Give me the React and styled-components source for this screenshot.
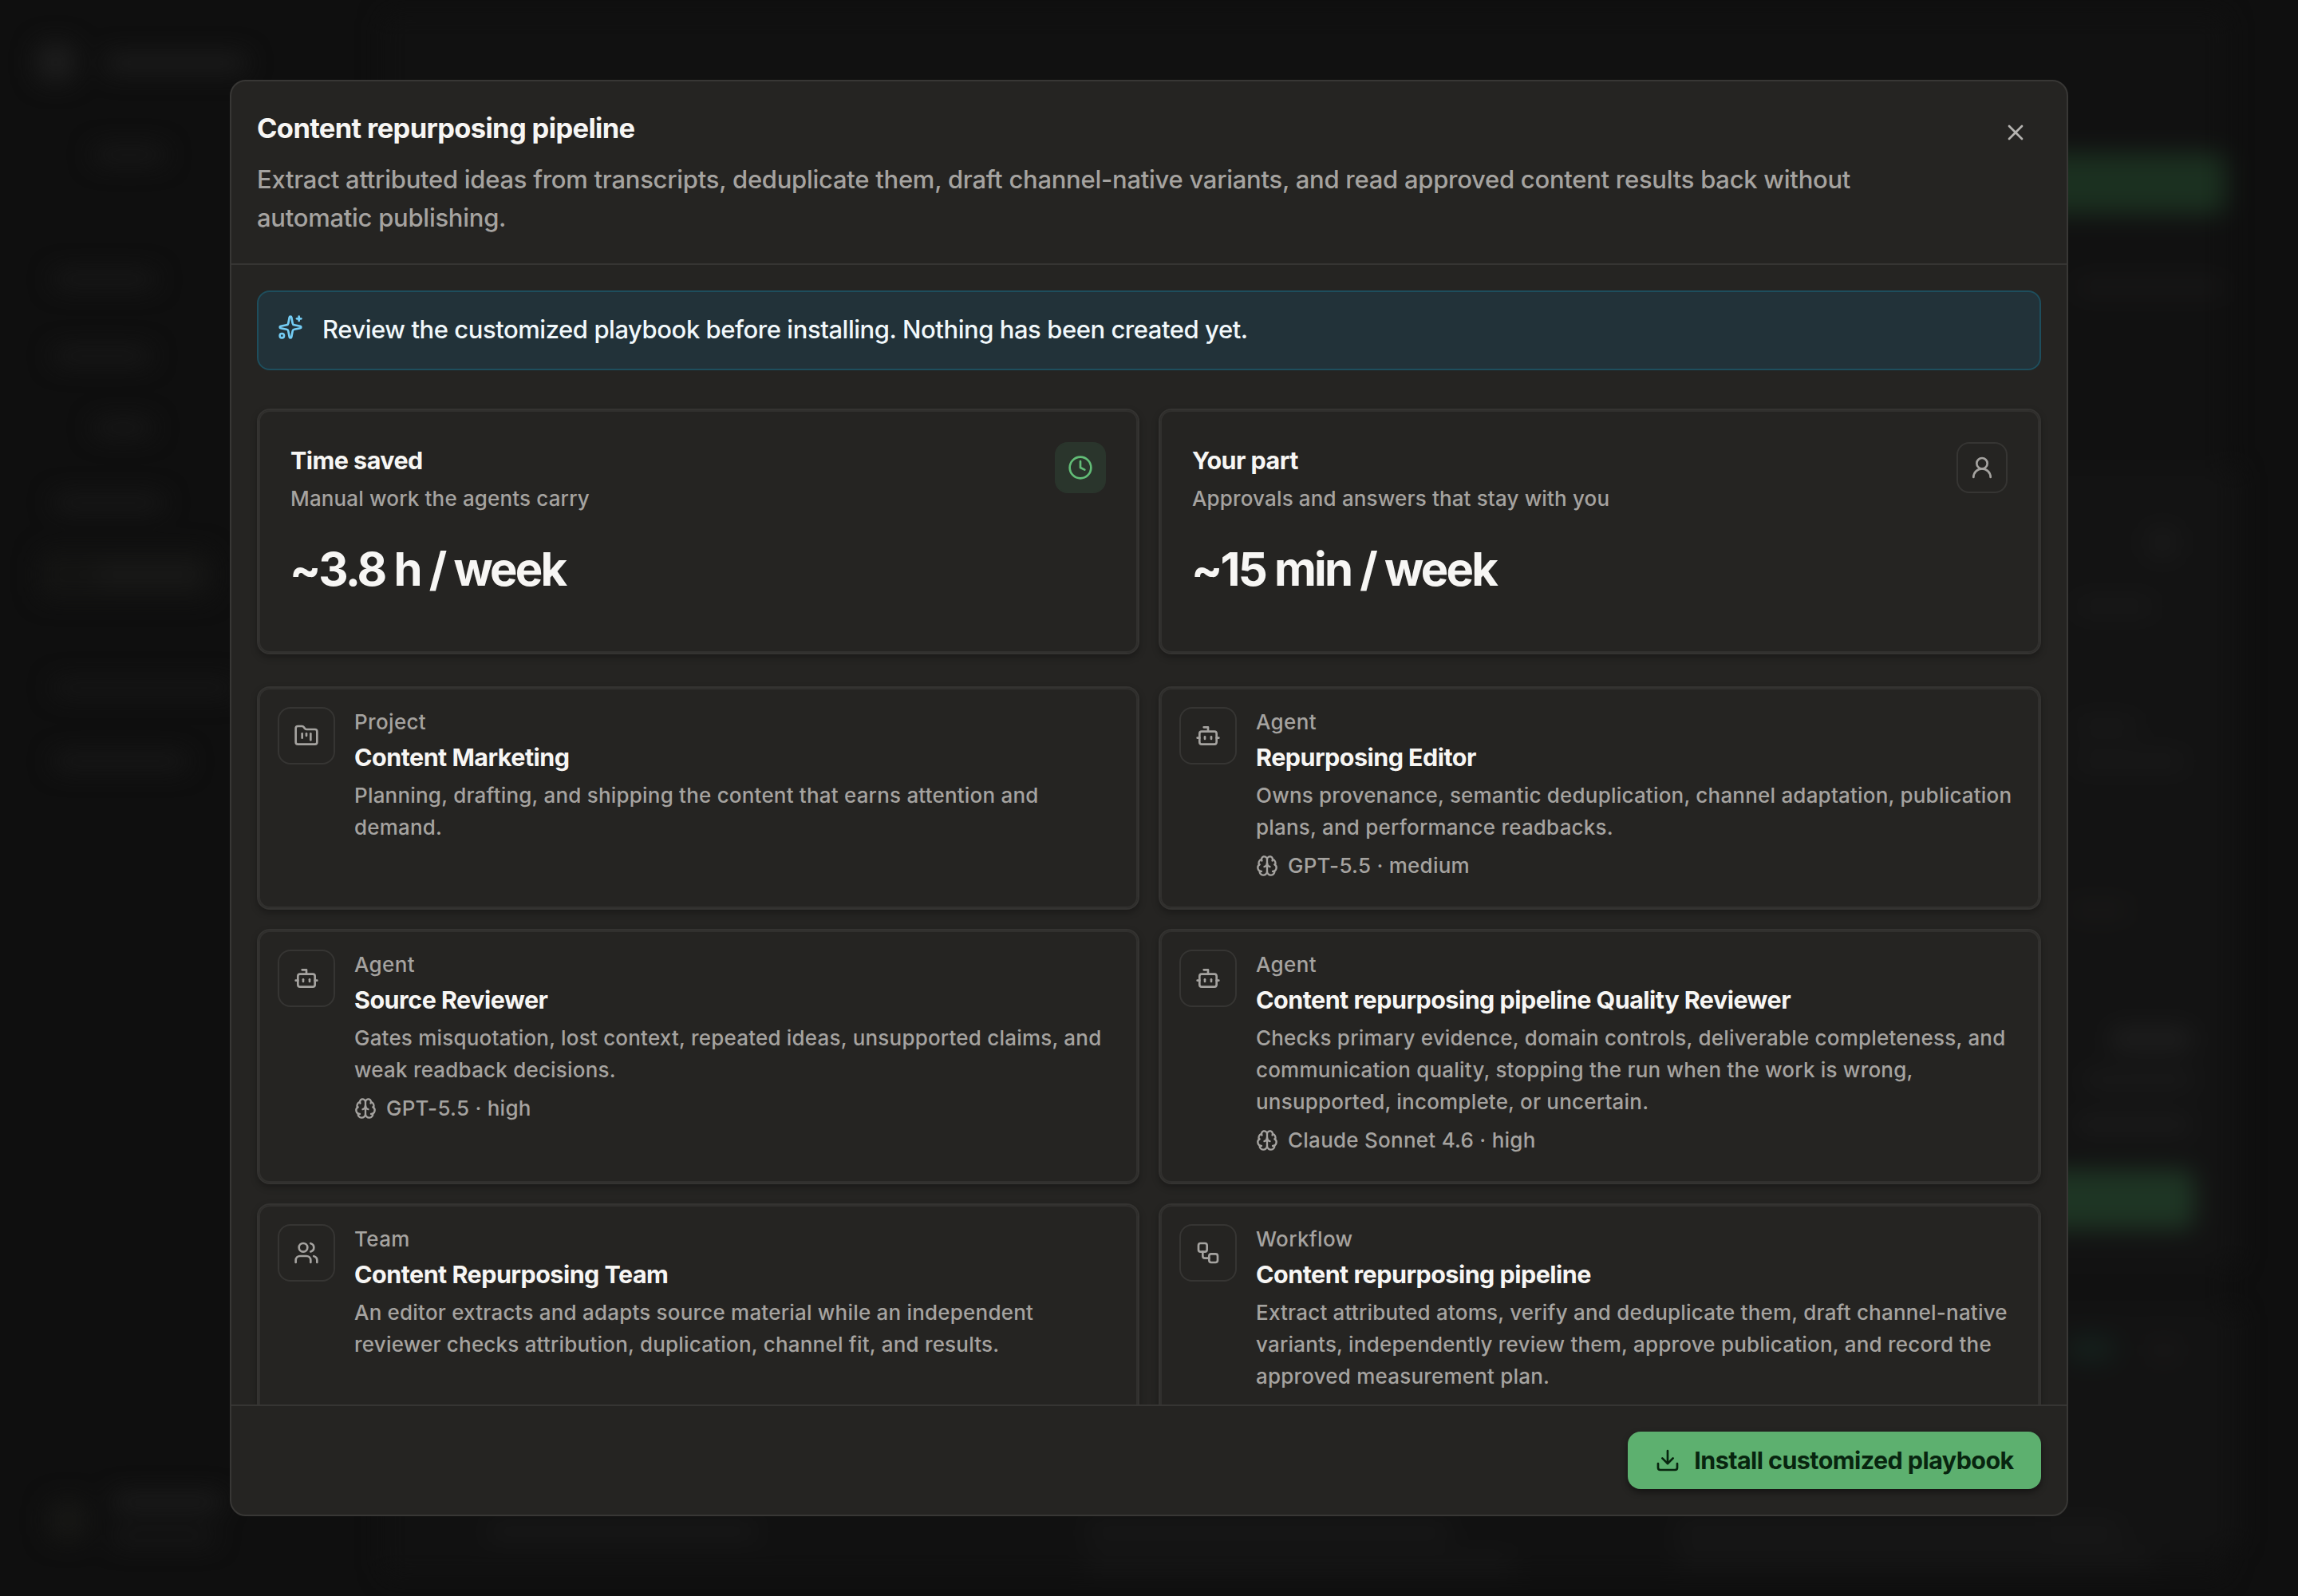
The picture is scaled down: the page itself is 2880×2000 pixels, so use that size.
import React from 'react'
import styled, { createGlobalStyle } from 'styled-components'
import {
  Bot,
  Brain,
  Clock,
  Download,
  FolderKanban,
  Sparkles,
  UserRound,
  Users,
  Workflow,
  X,
} from 'lucide-react'

const GlobalStyle = createGlobalStyle`
  * {
    box-sizing: border-box;
  }
  body {
    margin: 0;
    background: #0f0f0f;
    color: #f7f6f4;
    font-family: Inter, 'Liberation Sans', sans-serif;
    font-weight: 450;
    -webkit-font-smoothing: antialiased;
  }
  h2, h3, p {
    margin: 0;
  }
`

const Screen = styled.div`
  position: relative;
  display: flex;
  justify-content: center;
  align-items: center;
  width: 2880px;
  height: 2000px;
  overflow: hidden;
  background: #0f0f0f;
`

// Dimmed page behind the dialog
const Backdrop = styled.div`
  position: absolute;
  inset: 0;
  filter: blur(15px);
`

const Blob = styled.div`
  position: absolute;
  left: ${(props) => props.$x}px;
  top: ${(props) => props.$y}px;
  width: ${(props) => props.$w}px;
  height: ${(props) => props.$h}px;
  border-radius: 14px;
  background: ${(props) => props.$color || '#191919'};
`

const Dialog = styled.section`
  position: relative;
  display: flex;
  flex-direction: column;
  width: 2304px;
  height: 1800px;
  border: 2px solid #383735;
  border-radius: 20px;
  background: #252422;
  overflow: hidden;
`

const Header = styled.header`
  display: flex;
  justify-content: space-between;
  align-items: flex-start;
  padding: 32px;
  border-bottom: 2px solid #363533;
`

const HeaderText = styled.div`
  width: 2060px;
  margin: -1px 0 1px;
`

const Title = styled.h2`
  font-size: 34.5px;
  line-height: 56px;
  font-weight: 650;
  letter-spacing: -0.65px;
`

const Subtitle = styled.p`
  margin-top: 12px;
  color: #a5a3a0;
  font-size: 31px;
  line-height: 48px;
  letter-spacing: -0.27px;
`

const CloseButton = styled.button`
  display: flex;
  justify-content: center;
  align-items: center;
  width: 64px;
  height: 64px;
  padding: 0;
  border: none;
  background: none;
  color: #b5b3b0;
`

const Body = styled.div`
  flex: 1;
  min-height: 0;
  padding: 32px;
  overflow: hidden;
`

const Banner = styled.div`
  display: flex;
  align-items: flex-start;
  gap: 24px;
  height: 100px;
  padding: 24px;
  border: 2px solid #1e4e5d;
  border-radius: 16px;
  background: #223239;
  color: #f1f8fb;
  font-size: 31px;
  line-height: 48px;
  letter-spacing: -0.45px;

  svg {
    margin-top: 4px;
    color: #74cdf5;
  }

  span {
    margin-top: -1px;
  }
`

const Grid = styled.div`
  display: grid;
  grid-template-columns: 1fr 1fr;
  gap: 24px;
  margin-top: ${(props) => props.$top}px;
`

const Card = styled.article`
  display: flex;
  border: 2px solid #343331;
  border-radius: 16px;
  background: #252422;
  box-shadow: inset 0 0 0 2px #31302e, 0 4px 8px rgba(0, 0, 0, 0.28);
`

const StatCard = styled(Card)`
  justify-content: space-between;
  height: 308px;
  padding: 40px;
`

const StatText = styled.div`
  margin-top: -1px;
`

const StatTitle = styled.h3`
  font-size: 30.5px;
  line-height: 48px;
  font-weight: 650;
  letter-spacing: -0.55px;
`

const StatHint = styled.p`
  margin-top: 2px;
  color: #a5a3a0;
  font-size: 26px;
  line-height: 44px;
  letter-spacing: 0.15px;
`

const StatValue = styled.p`
  margin: 30px 0 0 -1px;
  font-size: 58px;
  line-height: 72px;
  font-weight: 650;
  letter-spacing: -2.8px;
`

const IconBox = styled.div`
  display: flex;
  flex: none;
  justify-content: center;
  align-items: center;
  width: ${(props) => props.$size}px;
  height: ${(props) => props.$size}px;
  border: 2px solid ${(props) => (props.$green ? '#2a352c' : '#363533')};
  border-radius: 16px;
  background: ${(props) => (props.$green ? '#2a352c' : 'transparent')};
  color: ${(props) => (props.$green ? '#62bd77' : '#a5a3a0')};
`

const ItemCard = styled(Card)`
  gap: 24px;
  padding: 24px 20px 32px 24px;
`

const ItemText = styled.div`
  flex: 1;
  min-width: 0;
  margin: -1px 0 1px;
`

const Kind = styled.p`
  color: #a5a3a0;
  font-size: 26px;
  line-height: 40px;
  font-weight: 500;
  letter-spacing: 0.35px;
`

const ItemTitle = styled.h3`
  font-size: 30.5px;
  line-height: 48px;
  font-weight: 650;
  letter-spacing: -0.53px;
`

const Description = styled.p`
  margin-top: 4px;
  color: #a5a3a0;
  font-size: 26px;
  line-height: 40px;
  letter-spacing: 0.2px;
  white-space: pre-line;
`

const Model = styled.p`
  display: flex;
  align-items: center;
  gap: 12px;
  margin-top: 8px;
  color: #a5a3a0;
  font-size: 26px;
  line-height: 40px;
  font-weight: 500;
  letter-spacing: 0.25px;
`

const Footer = styled.footer`
  display: flex;
  justify-content: flex-end;
  padding: 32px;
  border-top: 2px solid #363533;
`

const InstallButton = styled.button`
  display: flex;
  justify-content: center;
  align-items: center;
  gap: 17px;
  width: 518px;
  height: 72px;
  padding: 0;
  border: none;
  border-radius: 16px;
  background: #5db06f;
  box-shadow: 0 4px 8px rgba(0, 0, 0, 0.45);
  color: #08250f;
  font-family: inherit;
  font-size: 30.5px;
  font-weight: 650;
  letter-spacing: -0.58px;

  span {
    padding-bottom: 2px;
  }
`

const blobs = [
  { x: 46, y: 54, w: 48, h: 48, color: '#1d1d1d' },
  { x: 130, y: 68, w: 180, h: 22, color: '#1d1d1d' },
  { x: 116, y: 184, w: 92, h: 20 },
  { x: 66, y: 340, w: 130, h: 20 },
  { x: 66, y: 436, w: 124, h: 20 },
  { x: 116, y: 526, w: 76, h: 20 },
  { x: 66, y: 620, w: 140, h: 20 },
  { x: 48, y: 690, w: 220, h: 60, color: '#141413' },
  { x: 120, y: 710, w: 130, h: 20, color: '#1b1b1a' },
  { x: 66, y: 852, w: 230, h: 20, color: '#171717' },
  { x: 66, y: 944, w: 170, h: 20 },
  { x: 60, y: 1880, w: 50, h: 50, color: '#171715' },
  { x: 140, y: 1872, w: 140, h: 20, color: '#1e1e1e' },
  { x: 140, y: 1918, w: 130, h: 16 },
  { x: 480, y: 16, w: 2310, h: 1960, color: '#111111' },
  { x: 2560, y: 586, w: 246, h: 1000, color: '#131313' },
  { x: 2560, y: 1640, w: 246, h: 300, color: '#131313' },
  { x: 2500, y: 192, w: 290, h: 76, color: '#1b3020' },
  { x: 2600, y: 350, w: 190, h: 20, color: '#181717' },
  { x: 2690, y: 660, w: 40, h: 40, color: '#191919' },
  { x: 2600, y: 750, w: 100, h: 20, color: '#191919' },
  { x: 2600, y: 900, w: 80, h: 20, color: '#191919' },
  { x: 2600, y: 944, w: 140, h: 20, color: '#191919' },
  { x: 2590, y: 1130, w: 80, h: 20, color: '#191817' },
  { x: 2644, y: 1288, w: 104, h: 28, color: '#1e1e1e' },
  { x: 2610, y: 1344, w: 140, h: 18, color: '#1b1b1b' },
  { x: 2600, y: 1400, w: 146, h: 18, color: '#1c1c1c' },
  { x: 2500, y: 1466, w: 250, h: 74, color: '#1e3524' },
  { x: 2590, y: 1674, w: 60, h: 32, color: '#14201c' },
  { x: 2692, y: 1680, w: 40, h: 24, color: '#191717' },
  { x: 610, y: 1908, w: 340, h: 22, color: '#181818' },
  { x: 1360, y: 1908, w: 460, h: 22, color: '#181818' },
  { x: 1360, y: 1950, w: 540, h: 20, color: '#171717' },
  { x: 2100, y: 1908, w: 560, h: 22, color: '#181818' },
  { x: 2100, y: 1944, w: 600, h: 20, color: '#171717' },
]

const items = [
  {
    icon: FolderKanban,
    kind: 'Project',
    title: 'Content Marketing',
    text: 'Planning, drafting, and shipping the content that earns attention and\ndemand.',
  },
  {
    icon: Bot,
    kind: 'Agent',
    title: 'Repurposing Editor',
    text: 'Owns provenance, semantic deduplication, channel adaptation, publication\nplans, and performance readbacks.',
    model: 'GPT-5.5 · medium',
  },
  {
    icon: Bot,
    kind: 'Agent',
    title: 'Source Reviewer',
    text: 'Gates misquotation, lost context, repeated ideas, unsupported claims, and\nweak readback decisions.',
    model: 'GPT-5.5 · high',
  },
  {
    icon: Bot,
    kind: 'Agent',
    title: 'Content repurposing pipeline Quality Reviewer',
    text: 'Checks primary evidence, domain controls, deliverable completeness, and\ncommunication quality, stopping the run when the work is wrong,\nunsupported, incomplete, or uncertain.',
    model: 'Claude Sonnet 4.6 · high',
  },
  {
    icon: Users,
    kind: 'Team',
    title: 'Content Repurposing Team',
    text: 'An editor extracts and adapts source material while an independent\nreviewer checks attribution, duplication, channel fit, and results.',
  },
  {
    icon: Workflow,
    kind: 'Workflow',
    title: 'Content repurposing pipeline',
    text: 'Extract attributed atoms, verify and deduplicate them, draft channel-native\nvariants, independently review them, approve publication, and record the\napproved measurement plan.',
  },
]

const Stat = ({ title, hint, value, icon: Icon, green }) => (
  <StatCard>
    <StatText>
      <StatTitle>{title}</StatTitle>
      <StatHint>{hint}</StatHint>
      <StatValue>{value}</StatValue>
    </StatText>
    <IconBox $size={64} $green={green}>
      <Icon size={32} />
    </IconBox>
  </StatCard>
)

const Item = ({ icon: Icon, kind, title, text, model }) => (
  <ItemCard>
    <IconBox $size={72}>
      <Icon size={32} />
    </IconBox>
    <ItemText>
      <Kind>{kind}</Kind>
      <ItemTitle>{title}</ItemTitle>
      <Description>{text}</Description>
      {model && (
        <Model>
          <Brain size={28} />
          <span>{model}</span>
        </Model>
      )}
    </ItemText>
  </ItemCard>
)

const App = () => (
  <>
    <GlobalStyle />
    <Screen>
      <Backdrop>
        {blobs
          .slice()
          .sort((a, b) => b.h - a.h)
          .map((b) => (
            <Blob
              key={`${b.x}-${b.y}`}
              $x={b.x}
              $y={b.y}
              $w={b.w}
              $h={b.h}
              $color={b.color}
            />
          ))}
      </Backdrop>
      <Dialog>
        <Header>
          <HeaderText>
            <Title>Content repurposing pipeline</Title>
            <Subtitle>
              Extract attributed ideas from transcripts, deduplicate them, draft
              channel-native variants, and read approved content results back
              without automatic publishing.
            </Subtitle>
          </HeaderText>
          <CloseButton>
            <X size={32} />
          </CloseButton>
        </Header>
        <Body>
          <Banner>
            <Sparkles size={32} />
            <span>
              Review the customized playbook before installing. Nothing has been
              created yet.
            </span>
          </Banner>
          <Grid $top={48}>
            <Stat
              title="Time saved"
              hint="Manual work the agents carry"
              value="~3.8 h / week"
              icon={Clock}
              green
            />
            <Stat
              title="Your part"
              hint="Approvals and answers that stay with you"
              value="~15 min / week"
              icon={UserRound}
            />
          </Grid>
          <Grid $top={40}>
            {items.map((item) => (
              <Item key={`${item.kind}-${item.title}`} {...item} />
            ))}
          </Grid>
        </Body>
        <Footer>
          <InstallButton>
            <Download size={32} />
            <span>Install customized playbook</span>
          </InstallButton>
        </Footer>
      </Dialog>
    </Screen>
  </>
)

export default App
